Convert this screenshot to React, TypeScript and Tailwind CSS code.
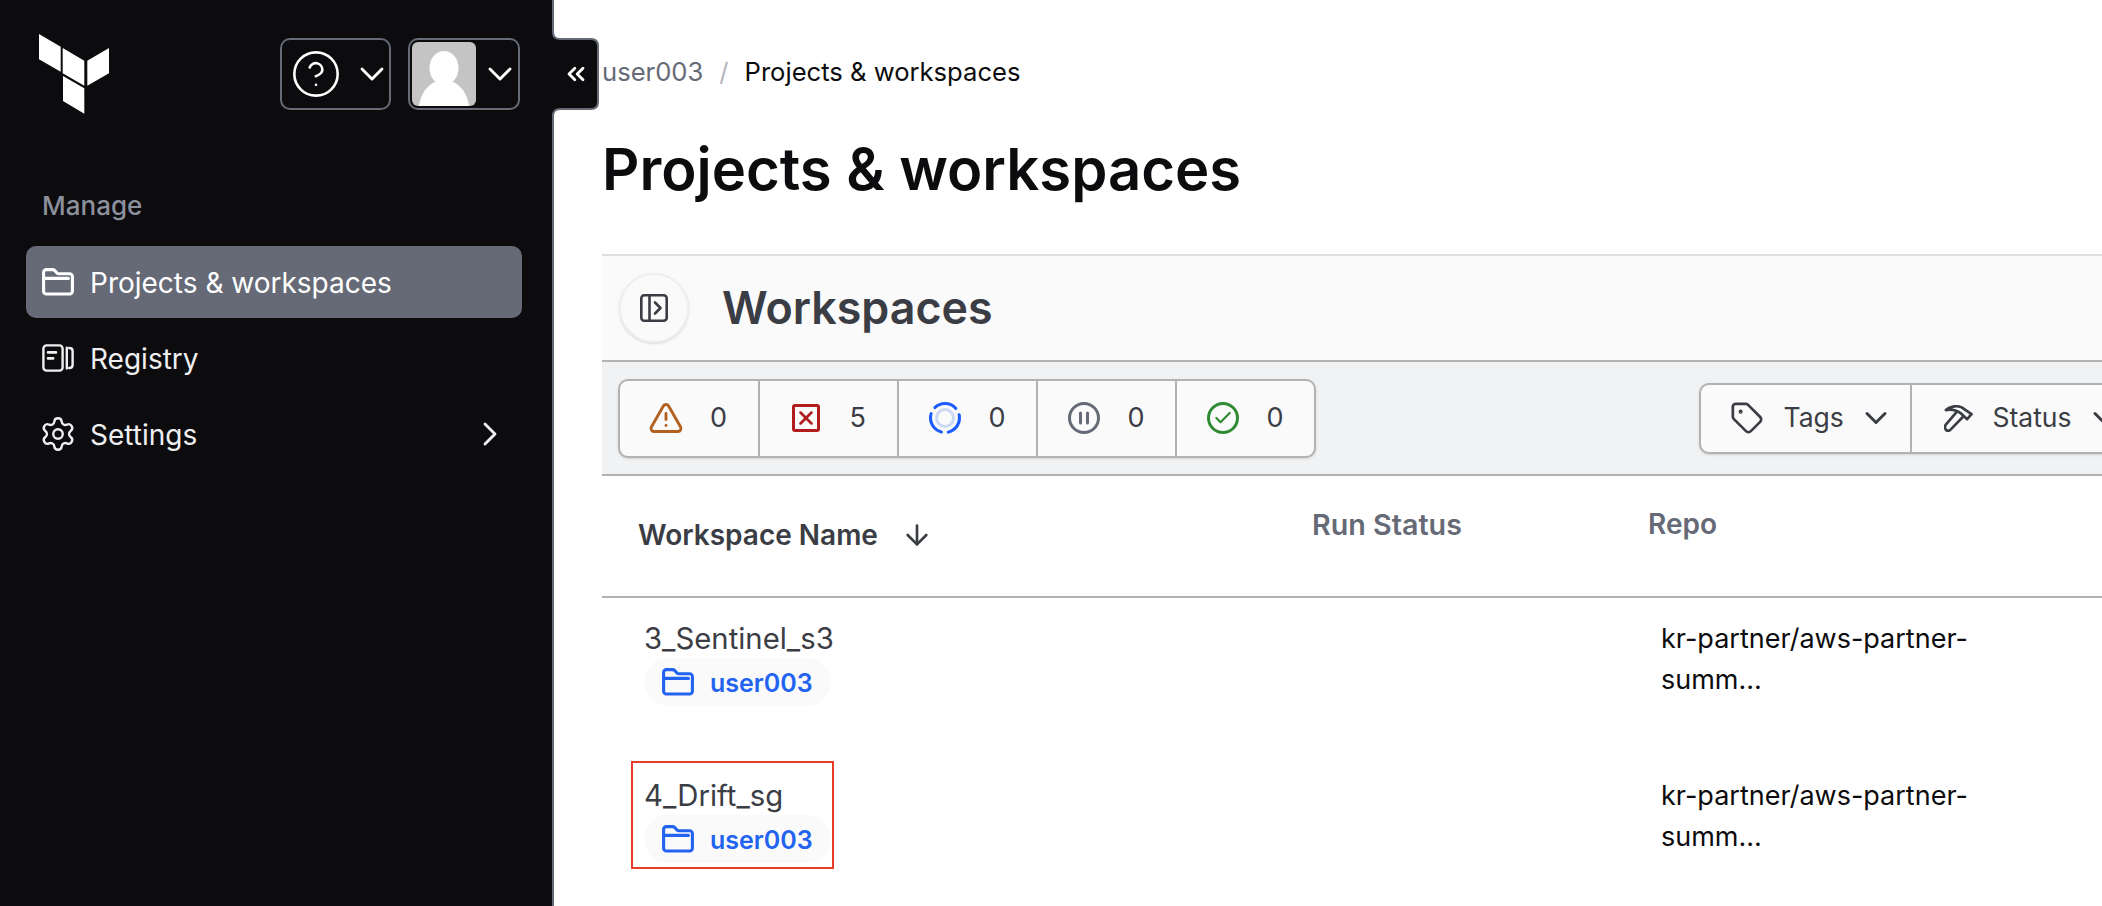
import { ArrowDown, ChevronDown, ChevronRight, ChevronsLeft, Check, CircleHelp, Settings, Tag, TriangleAlert, X } from "lucide-react";

function FolderIcon({ className }: { className: string }) {
  return (
    <svg viewBox="0 0 16 14" fill="none" stroke="currentColor" strokeWidth="1.55" strokeLinejoin="round" strokeLinecap="round" className={className}>
      <path d="M.8 2.2A1.4 1.4 0 0 1 2.2.8h3.1c.4 0 .8.2 1.1.5l1 1.1c.3.3.6.5 1 .5h5.4a1.4 1.4 0 0 1 1.4 1.4v7.3a1.4 1.4 0 0 1-1.4 1.4H2.2a1.4 1.4 0 0 1-1.4-1.4z" />
      <path d="M.8 5.2h12.4" />
    </svg>
  );
}

function RegistryIcon() {
  return (
    <svg viewBox="0 0 16 14" fill="none" stroke="currentColor" strokeWidth="1.2" strokeLinecap="round" className="w-[32px] h-[28px] shrink-0">
      <rect x=".7" y=".7" width="9.6" height="12.6" rx="1.6" />
      <path d="M3 4.2h4M3 7.2h2.6" strokeWidth="1.3" />
      <path d="M12.4 1.8v10.4M13.6 2c1.2 0 1.7.6 1.7 1.5v7c0 .9-.5 1.5-1.7 1.5" />
    </svg>
  );
}

function HammerIcon() {
  return (
    <svg viewBox="0 0 85 80" fill="none" stroke="currentColor" strokeWidth="8" strokeLinejoin="round" strokeLinecap="round" className="w-[29px] h-[27px] shrink-0">
      <path d="M5 15C15 5 36 0 52 7L81 27L68 42L50 25C40 18 22 12 5 15Z" />
      <path d="M36 22L5 58C1 64 2 70 6 74C10 78 15 77 19 73L56 35" />
    </svg>
  );
}

function Logo() {
  return (
    <svg viewBox="0 0 70 80" className="w-[70px] h-[80px] shrink-0" fill="#ffffff">
      <polygon points="0,0 21.7,12.7 21.7,37.7 0,25.3" />
      <polygon points="23.7,14 45.3,26.7 45.3,51.7 23.7,39.3" />
      <polygon points="48.3,26.7 70,14 70,39.3 48.3,51.7" />
      <polygon points="24,42 45.3,54.3 45.3,79.7 24,67" />
    </svg>
  );
}

function SidebarTab() {
  return (
    <div className="absolute left-[549px] top-[24px] w-[52px] h-[100px] text-white z-10">
      <svg viewBox="0 0 52 100" className="absolute inset-0 w-full h-full">
        <path d="M0 0H4V8Q4 15 11 15H42Q49 15 49 22V78Q49 85 42 85H11Q4 85 4 92V100H0Z" fill="#0c0c0e" />
        <path d="M4 0V8Q4 15 11 15H42Q49 15 49 22V78Q49 85 42 85H11Q4 85 4 92V100" fill="none" stroke="#656a76" strokeWidth="2" />
      </svg>
      <ChevronsLeft className="absolute left-[13px] top-[36px] w-[28px] h-[28px]" strokeWidth={2.4} />
    </div>
  );
}

function Spinner() {
  return (
    <svg viewBox="0 0 32 32" fill="none" className="w-[32px] h-[32px] shrink-0">
      <circle cx="16" cy="16" r="14.5" stroke="#1c5cff" strokeWidth="3" strokeLinecap="round" strokeDasharray="23.4 7" strokeDashoffset="4.1" />
      <circle cx="16" cy="16" r="8.5" stroke="#ccd9f5" strokeWidth="3" />
    </svg>
  );
}

function PauseIcon() {
  return (
    <svg viewBox="0 0 32 32" fill="none" stroke="#656a76" strokeWidth="3" className="w-[32px] h-[32px] shrink-0">
      <circle cx="16" cy="16" r="14.5" />
      <path d="M12.5 11v10M19.5 11v10" strokeLinecap="round" />
    </svg>
  );
}

function CheckIcon() {
  return (
    <div className="w-[32px] h-[32px] shrink-0 rounded-full border-[3px] border-[#2e8b34] flex items-center justify-center text-[#2e8b34]">
      <Check className="w-[20px] h-[20px]" strokeWidth={2.6} />
    </div>
  );
}

function WarningIcon() {
  return <TriangleAlert className="w-[38px] h-[36px] shrink-0 -mx-[3px] text-[#b35f1e]" strokeWidth={1.9} />;
}

function ErrorIcon() {
  return (
    <div className="w-[28px] h-[28px] shrink-0 mx-[2px] rounded-[3px] border-[3px] border-[#b11c1c] flex items-center justify-center text-[#b11c1c]">
      <X className="w-[24px] h-[24px]" strokeWidth={2.8} />
    </div>
  );
}

const statusCounts = [
  { icon: <WarningIcon />, count: 0 },
  { icon: <ErrorIcon />, count: 5 },
  { icon: <Spinner />, count: 0 },
  { icon: <PauseIcon />, count: 0 },
  { icon: <CheckIcon />, count: 0 },
];

function WorkspaceRow({ name, boxed }: { name: string; boxed?: boolean }) {
  return (
    <div className="relative grid grid-cols-[1035px_1fr] h-[157px]">
      <div className="pl-[42px] pt-[22px]">
        <div className="text-[29.3px] leading-[38px] text-[#3b3d45]">{name}</div>
        <div className="inline-flex items-center gap-[16px] h-[48px] pl-[18px] pr-[18px] rounded-full bg-[#fafafa] text-[#2264f0]">
          <FolderIcon className="w-[32px] h-[28px] shrink-0" />
          <span className="pt-[3px] text-[25px] font-semibold">user003</span>
        </div>
      </div>
      <div className="pl-[24px] pt-[20px] text-[27px] leading-[41px] text-[#0c0c0e]">
        <div>kr-partner/aws-partner-</div>
        <div>summ...</div>
      </div>
      {boxed && <div className="absolute left-[29px] top-[6px] w-[203px] h-[108px] border-2 border-[#e63d2a]" />}
    </div>
  );
}

export default function App() {
  return (
    <div className="relative flex h-[906px] w-[2102px] overflow-hidden bg-white font-['Inter',sans-serif]">
      <aside className="w-[554px] shrink-0 bg-[#0c0c0e] border-r-2 border-[#656a76] text-white">
        <div className="flex items-start pl-[39px] pr-[32px] pt-[34px]">
          <Logo />
          <div className="ml-auto mt-[4px] flex gap-[17px]">
            <button className="flex items-center w-[111px] h-[72px] pl-[8px] rounded-[10px] border-2 border-[#656a76]">
              <CircleHelp className="w-[52px] h-[52px] shrink-0" strokeWidth={1.2} />
              <ChevronDown className="ml-[10px] w-[40px] h-[40px] shrink-0" strokeWidth={1.7} />
            </button>
            <button className="flex items-center w-[112px] h-[72px] pl-[2px] rounded-[10px] border-2 border-[#656a76]">
              <svg viewBox="0 0 64 64" className="w-[64px] h-[64px] shrink-0 rounded-[6px] bg-[#c4c4c4]" fill="#ffffff">
                <ellipse cx="32" cy="26" rx="14.5" ry="17" />
                <path d="M7 64C9 48 20 38 32 38S55 48 57 64Z" />
              </svg>
              <ChevronDown className="ml-[4px] w-[40px] h-[40px] shrink-0" strokeWidth={1.7} />
            </button>
          </div>
        </div>
        <div className="mt-[75px] pl-[42px] text-[26px] leading-[34px] font-medium text-[#8c909c]">Manage</div>
        <nav className="mt-[23px] ml-[26px] mr-[30px] flex flex-col gap-[4px] text-[28px]">
          <div className="flex items-center h-[72px] pl-[16px] gap-[16px] rounded-[10px] bg-[#656a76]">
            <FolderIcon className="w-[32px] h-[28px] shrink-0" />
            <span className="pt-[1px]">Projects &amp; workspaces</span>
          </div>
          <div className="flex items-center h-[72px] pl-[16px] gap-[16px] text-[#efeff1]">
            <RegistryIcon />
            <span className="pt-[1px]">Registry</span>
          </div>
          <div className="flex items-center h-[72px] pl-[13px] gap-[13px] text-[#efeff1]">
            <Settings className="w-[38px] h-[38px] shrink-0" strokeWidth={1.5} />
            <span className="pt-[1px]">Settings</span>
            <ChevronRight className="ml-auto mr-[12px] w-[40px] h-[40px]" strokeWidth={1.7} />
          </div>
        </nav>
      </aside>

      <SidebarTab />

      <main className="flex-1 min-w-0 pl-[48px]">
        <div className="pt-[54px] flex items-center h-[90px] text-[25.6px] leading-[36px]">
          <span className="text-[#656a76]">user003</span>
          <span className="mx-[16px] text-[#b2b6bd]">/</span>
          <span className="text-[#0c0c0e]">Projects &amp; workspaces</span>
        </div>
        <h1 className="mt-[45px] h-[69px] text-[58px] leading-[68px] font-semibold text-[#0c0c0e]">Projects &amp; workspaces</h1>

        <section className="mt-[50px] border-t-2 border-[#dedfe3]">
          <div className="flex items-center h-[106px] pl-[17px] gap-[33px] bg-[#fafafa] border-b-2 border-[#b2b2b2]">
            <button className="flex items-center justify-center w-[70px] h-[70px] rounded-full bg-[#fafafa] border-2 border-[#efefef] shadow-sm text-[#3b3d45]">
              <svg viewBox="0 0 28 28" fill="none" stroke="currentColor" strokeWidth="2.6" strokeLinecap="round" strokeLinejoin="round" className="w-[28px] h-[28px]">
                <rect x="1.3" y="1.3" width="25.4" height="25.4" rx="3" />
                <path d="M9.5 1.3v25.4M15 8.5l5.5 5.5L15 19.5" />
              </svg>
            </button>
            <h2 className="pt-[1px] text-[44.8px] font-semibold text-[#3b3d45]">Workspaces</h2>
          </div>

          <div className="flex items-center h-[114px] pl-[16px] bg-[#f1f2f4] border-b-2 border-[#b2b2b2]">
            <div className="flex shrink-0 h-[79px] rounded-[10px] border-2 border-[#b2b2b2] bg-[#fafafa] shadow-sm">
              {statusCounts.map((s, i) => (
                <div key={i} className={`flex items-center gap-[28px] ${i > 0 ? "w-[139px] pl-[30px] border-l-2 border-[#b2b2b2]" : "w-[137.5px] pl-[30px]"}`}>
                  {s.icon}
                  <span className="text-[27px] text-[#3b3d45]">{s.count}</span>
                </div>
              ))}
            </div>
            <div className="ml-[383px] flex shrink-0 h-[71px] text-[26.5px] text-[#3b3d45] rounded-[10px] border-2 border-[#b2b2b2] bg-[#fafafa] shadow-sm">
              <div className="flex items-center w-[211px] pl-[29px] border-r-2 border-[#b2b2b2]">
                <Tag className="w-[34px] h-[34px] shrink-0" strokeWidth={1.9} />
                <span className="ml-[20px]">Tags</span>
                <ChevronDown className="ml-[14px] w-[36px] h-[36px] shrink-0" strokeWidth={2} />
              </div>
              <div className="flex items-center pl-[32px] pr-[30px]">
                <HammerIcon />
                <span className="ml-[20px]">Status</span>
                <ChevronDown className="ml-[14px] w-[36px] h-[36px] shrink-0" strokeWidth={2} />
              </div>
            </div>
          </div>

          <div className="grid grid-cols-[698px_336px_1fr] h-[122px] border-b-2 border-[#b2b2b2] text-[28px] font-semibold">
            <div className="flex items-center pl-[36px] pb-[2px] text-[#3b3d45]">
              <span>Workspace Name</span>
              <ArrowDown className="ml-[23px] w-[32px] h-[32px]" strokeWidth={2} />
            </div>
            <div className="pl-[12px] pt-[27px] text-[28.7px] text-[#656a76]">Run Status</div>
            <div className="pl-[12px] pt-[27px] text-[#656a76]">Repo</div>
          </div>

          <WorkspaceRow name="3_Sentinel_s3" />
          <WorkspaceRow name="4_Drift_sg" boxed />
        </section>
      </main>
    </div>
  );
}
